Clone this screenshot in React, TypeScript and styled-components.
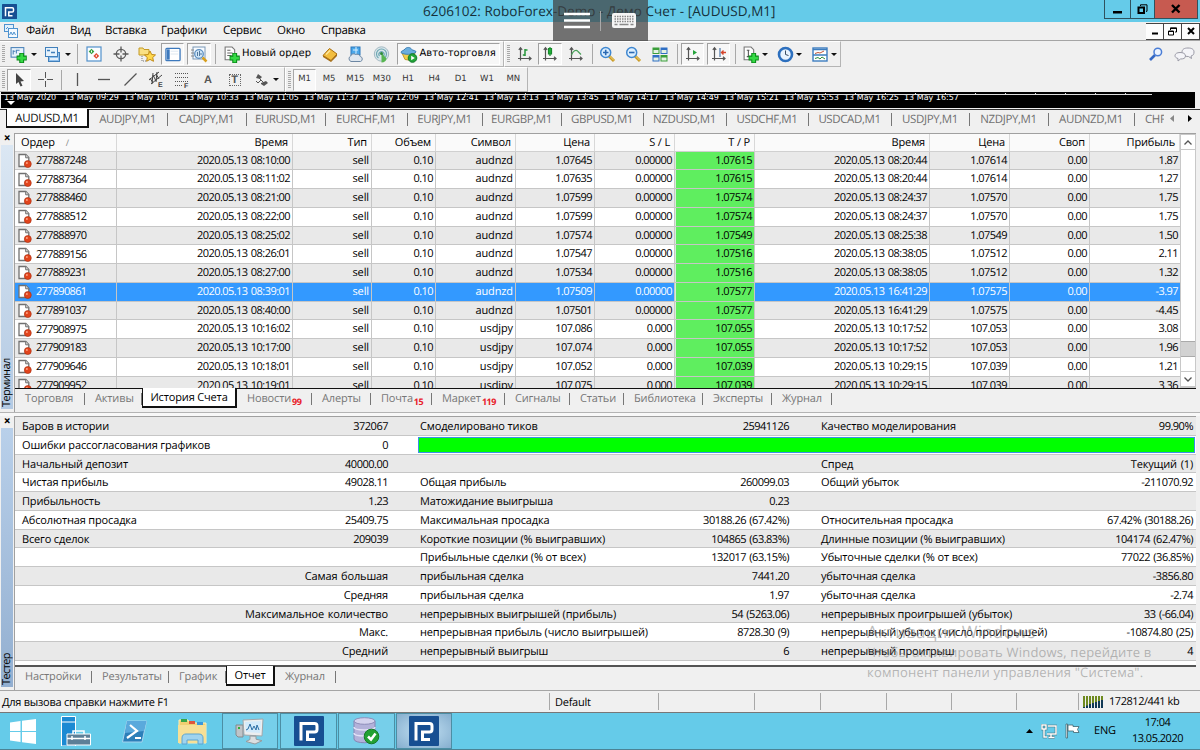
import React from 'react';
import styled, { createGlobalStyle, css } from 'styled-components';

const LOGO_BLUE = '#174f92';

const historyColumns = [
  { title: 'Ордер', width: 102 },
  { title: 'Время', width: 176 },
  { title: 'Тип', width: 79 },
  { title: 'Объем', width: 64 },
  { title: 'Символ', width: 80 },
  { title: 'Цена', width: 79 },
  { title: 'S / L', width: 80 },
  { title: 'T / P', width: 80 },
  { title: 'Время', width: 175 },
  { title: 'Цена', width: 80 },
  { title: 'Своп', width: 80 },
  { title: 'Прибыль', width: 90 },
];

const orders = [
  ['277887248', '08:10:00', 'audnzd', '1.07645', '0.00000', '1.07615', '08:20:44', '1.07614', '1.87'],
  ['277887364', '08:11:02', 'audnzd', '1.07635', '0.00000', '1.07615', '08:20:44', '1.07614', '1.27'],
  ['277888460', '08:21:00', 'audnzd', '1.07599', '0.00000', '1.07574', '08:24:37', '1.07570', '1.75'],
  ['277888512', '08:22:00', 'audnzd', '1.07599', '0.00000', '1.07574', '08:24:37', '1.07570', '1.75'],
  ['277888970', '08:25:02', 'audnzd', '1.07574', '0.00000', '1.07549', '08:25:38', '1.07549', '1.50'],
  ['277889156', '08:26:01', 'audnzd', '1.07547', '0.00000', '1.07516', '08:38:05', '1.07512', '2.11'],
  ['277889231', '08:27:00', 'audnzd', '1.07534', '0.00000', '1.07516', '08:38:05', '1.07512', '1.32'],
  ['277890861', '08:39:01', 'audnzd', '1.07509', '0.00000', '1.07577', '16:41:29', '1.07575', '-3.97'],
  ['277891037', '08:40:00', 'audnzd', '1.07501', '0.00000', '1.07577', '16:41:29', '1.07575', '-4.45'],
  ['277908975', '10:16:02', 'usdjpy', '107.086', '0.000', '107.055', '10:17:52', '107.053', '3.08'],
  ['277909183', '10:17:00', 'usdjpy', '107.074', '0.000', '107.055', '10:17:52', '107.053', '1.96'],
  ['277909646', '10:18:01', 'usdjpy', '107.052', '0.000', '107.039', '10:29:15', '107.039', '1.21'],
  ['277909952', '10:19:01', 'usdjpy', '107.075', '0.000', '107.039', '10:29:15', '107.039', '3.36'],
];
const SELECTED_ORDER = '277890861';

const report = [
  ['Баров в истории', '372067', 'Смоделировано тиков', '25941126', 'Качество моделирования', '99.90%'],
  ['Ошибки рассогласования графиков', '0', '', '', '', ''],
  ['Начальный депозит', '40000.00', '', '', 'Спред', 'Текущий (1)'],
  ['Чистая прибыль', '49028.11', 'Общая прибыль', '260099.03', 'Общий убыток', '-211070.92'],
  ['Прибыльность', '1.23', 'Матожидание выигрыша', '0.23', '', ''],
  ['Абсолютная просадка', '25409.75', 'Максимальная просадка', '30188.26 (67.42%)', 'Относительная просадка', '67.42% (30188.26)'],
  ['Всего сделок', '209039', 'Короткие позиции (% выигравших)', '104865 (63.83%)', 'Длинные позиции (% выигравших)', '104174 (62.47%)'],
  ['', '', 'Прибыльные сделки (% от всех)', '132017 (63.15%)', 'Убыточные сделки (% от всех)', '77022 (36.85%)'],
  ['', 'Самая большая', 'прибыльная сделка', '7441.20', 'убыточная сделка', '-3856.80'],
  ['', 'Средняя', 'прибыльная сделка', '1.97', 'убыточная сделка', '-2.74'],
  ['', 'Максимальное количество', 'непрерывных выигрышей (прибыль)', '54 (5263.06)', 'непрерывных проигрышей (убыток)', '33 (-66.04)'],
  ['', 'Макс.', 'непрерывная прибыль (число выигрышей)', '8728.30 (9)', 'непрерывный убыток (число проигрышей)', '-10874.80 (25)'],
  ['', 'Средний', 'непрерывный выигрыш', '6', 'непрерывный проигрыш', '4'],
];

const chartTabs = [
  { title: 'AUDJPY,M1', width: 79 },
  { title: 'CADJPY,M1', width: 79 },
  { title: 'EURUSD,M1', width: 79 },
  { title: 'EURCHF,M1', width: 82 },
  { title: 'EURJPY,M1', width: 75 },
  { title: 'EURGBP,M1', width: 79 },
  { title: 'GBPUSD,M1', width: 82 },
  { title: 'NZDUSD,M1', width: 83 },
  { title: 'USDCHF,M1', width: 82 },
  { title: 'USDCAD,M1', width: 83 },
  { title: 'USDJPY,M1', width: 78 },
  { title: 'NZDJPY,M1', width: 79 },
  { title: 'AUDNZD,M1', width: 86 },
];

const terminalTabs = [
  { title: 'Торговля', width: 70 },
  { title: 'Активы', width: 57 },
  { title: 'История Счета', width: 95, active: true },
  { title: 'Новости', width: 75, badge: '99' },
  { title: 'Алерты', width: 59 },
  { title: 'Почта', width: 61, badge: '15' },
  { title: 'Маркет', width: 73, badge: '119' },
  { title: 'Сигналы', width: 65 },
  { title: 'Статьи', width: 54 },
  { title: 'Библиотека', width: 79 },
  { title: 'Эксперты', width: 69 },
  { title: 'Журнал', width: 60 },
];

const testerTabs = [
  { title: 'Настройки', width: 77 },
  { title: 'Результаты', width: 77 },
  { title: 'График', width: 57 },
  { title: 'Отчет', width: 49, active: true },
  { title: 'Журнал', width: 61 },
];

const menus = [
  { title: 'Файл', width: 44 },
  { title: 'Вид', width: 35 },
  { title: 'Вставка', width: 56 },
  { title: 'Графики', width: 62 },
  { title: 'Сервис', width: 54 },
  { title: 'Окно', width: 44 },
  { title: 'Справка', width: 60 },
];

const times = ['2020', '09:29', '10:01', '10:33', '11:05', '11:37', '12:09', '12:41', '13:13', '13:45', '14:17', '14:49', '15:21', '15:53', '16:25', '16:57'];
const periods = ['M5', 'M15', 'M30', 'H1', 'H4', 'D1', 'W1', 'MN'];

const AxesIcon = ({ children }: { children?: React.ReactNode }) => (
  <svg width="16" height="16" viewBox="0 0 16 16" fill="none" stroke="#555" strokeWidth="1.2">
    <path d="M3.5 2v12.5M1 12.5h13M1.8 3.8 3.5 1.8l1.7 2M12 10.8l2 1.7-2 1.7" />
    {children}
  </svg>
);

const PlusMark = () => (
  <>
    <path d="M11 6.5v9.500M6.200 11.300h9.600" stroke="#0b8a1a" strokeWidth="4.600" />
    <path d="M11 7.300v8M7 11.300h8" stroke="#35da45" strokeWidth="2.600" />
  </>
);

const NewChartIcon = () => (
  <svg width="17" height="17" viewBox="0 0 16 16" fill="none">
    <rect x="1" y="1.500" width="12" height="9" fill="#e8f3fc" stroke="#4b82b8" />
    <path d="M3 8V4M3 5h2M6 7V4h3" stroke="#4b82b8" />
    <PlusMark />
  </svg>
);

const ProfilesIcon = () => (
  <svg width="17" height="17" viewBox="0 0 17 17" fill="none" stroke="#4180bb">
    <rect x="4.500" y="6.500" width="11" height="9" fill="#8fbfec" />
    <rect x="1.500" y="1.500" width="12" height="9" fill="#e6f2fc" />
    <path d="M3 4.500h3M7 6.500h4" strokeWidth="1.300" />
    <path d="M6 13h8" stroke="#fff" strokeWidth="1.500" />
  </svg>
);

const MarketIcon = () => (
  <svg width="16" height="16" viewBox="0 0 16 16" fill="none">
    <rect x="1" y="1" width="14" height="14" fill="#fbfdff" stroke="#5291cb" strokeWidth="1.200" />
    <path d="m5.500 2.700 2.800 2.800-2.800 2.800-2.800-2.800z" fill="#35a23e" />
    <path d="m10.300 7 2.900 2.900-2.900 2.900-2.900-2.900z" fill="#e2482f" />
    <path d="M5.500 4.500v2M10.300 8.900v2" stroke="#fff" />
  </svg>
);

const TargetIcon = () => (
  <svg width="16" height="16" viewBox="0 0 16 16" fill="none" stroke="#5b5b5b" strokeWidth="1.300">
    <circle cx="8" cy="8" r="4.700" />
    <path d="M8 .5v6M8 9.500v6M.5 8h6M9.500 8h6" />
  </svg>
);

const NavigatorIcon = () => (
  <svg width="18" height="17" viewBox="0 0 18 17" fill="none">
    <path d="M1 2h4l1 1.500h5V9H1z" fill="#f9e084" stroke="#c49a25" />
    <path d="M4 10v5h4" stroke="#777" strokeDasharray="1 1" />
    <path d="m12 5 1.700 3.500 3.800.4-2.800 2.600.8 3.800-3.500-1.900-3.400 1.900.7-3.800L6.500 9l3.800-.5z" fill="#ffd84c" stroke="#c08a16" />
  </svg>
);

const TerminalIcon = () => (
  <svg width="16" height="15" viewBox="0 0 17 15" fill="none">
    <rect x="1" y="1" width="15" height="13" rx="1" fill="#fff" stroke="#3d79bd" strokeWidth="1.400" />
    <path d="M3.500 2v11" stroke="#3d79bd" strokeWidth="3" />
    <path d="M6 4h8M6 7h8" stroke="#dce6f0" />
  </svg>
);

const TesterIcon = () => (
  <svg width="18" height="17" viewBox="0 0 18 17" fill="none">
    <rect x="3" y="1" width="12" height="12" fill="#f7fbff" stroke="#7a97b5" />
    <path d="M1 4h3M1 7h3M1 10h3" stroke="#888" />
    <circle cx="9" cy="8" r="4.300" fill="#c9e2f7" fillOpacity=".85" stroke="#5c8fc2" strokeWidth="1.300" />
    <path d="M7.500 10V6M9.500 10V5M11 9V7" stroke="#51799e" />
    <path d="m12.500 11.500 4 4" stroke="#d8a01d" strokeWidth="2.500" />
  </svg>
);

const NewOrderIcon = ({ chart }: { chart?: boolean }) => (
  <svg width="17" height="17" viewBox="0 0 16 16" fill="none">
    <path d="M2 1h6.500l2.500 2.500V13H2z" fill="#fdfdfd" stroke="#777" />
    {chart ? <path d="M6 4v6M4.500 4H7M4.500 10H7" stroke="#555" /> : <path d="M4 4h3M4 6.500h5M4 9h4" stroke="#666" />}
    <PlusMark />
  </svg>
);

const EditorIcon = () => (
  <svg width="16" height="15" viewBox="0 0 16 15">
    <path d="M1 8.500 7.500 1.500 15 7l-6 6.500z" fill="#f2bd3e" stroke="#a86e11" />
    <path d="m1 8.500 8 5 6-6.500v2L9 15 1 10z" fill="#a66d14" />
    <path d="m4 7.500 4-4" stroke="#ffe79c" strokeWidth="1.500" />
  </svg>
);

const VpsIcon = () => (
  <svg width="17" height="17" viewBox="0 0 17 17">
    <rect x="4" y="1" width="9" height="8" fill="#49a7ea" stroke="#2d78bb" />
    <path d="M6 4h5M9 1v7" stroke="#d7efff" />
    <path d="M4 15.500a3 3 0 0 1-.3-5.500 3 3 0 0 1 4.800-1.500 3.500 3.500 0 0 1 4.800 2 2.600 2.600 0 0 1 .2 5z" fill="#dfe7ef" stroke="#6d87a3" />
  </svg>
);

const SignalsIcon = () => (
  <svg width="17" height="17" viewBox="0 0 17 17" fill="none">
    <circle cx="8.500" cy="8" r="7.200" fill="#d9e6ea" stroke="#a3b9c3" />
    <path d="M5.500 12a5 5 0 1 1 6 0M6.500 10a2.600 2.600 0 1 1 4 0" stroke="#6fa8b4" strokeWidth="1.200" />
    <path d="M8.500 7v9.500c3 0 5-2 5-4z" fill="#58b551" />
    <circle cx="8.500" cy="7.500" r="1.500" fill="#2f8a3a" />
  </svg>
);

const AutoIcon = () => (
  <svg width="18" height="17" viewBox="0 0 18 17">
    <path d="m2 7 3 6.500 7 1L15 7z" fill="#f2cf4a" stroke="#c4982b" />
    <path d="M1 6.500C1 4.500 4 4.800 5 3c1.500-2.200 5.500-2 6.500.3C13 5 16 4 16 6c-2 3-13 3-15 .5z" fill="#6aaede" stroke="#3d7fb5" />
    <circle cx="12.500" cy="12" r="4.300" fill="#22a538" stroke="#12792a" />
    <path d="M11.200 9.800v4.400l3.600-2.200z" fill="#fff" />
  </svg>
);

const ZoomIcon = ({ plus }: { plus?: boolean }) => (
  <svg width="17" height="17" viewBox="0 0 17 17" fill="none">
    <path d="m9.500 9.500 5.500 5.500" stroke="#c99a27" strokeWidth="3" />
    <path d="m10.500 10 4.500 4.500" stroke="#f4d877" />
    <circle cx="6.700" cy="6.500" r="5" fill="#dcefff" stroke="#3f87d0" strokeWidth="1.500" />
    <path d={plus ? 'M4 6.500h5.500M6.700 3.800v5.500' : 'M4 6.500h5.500'} stroke="#2b69b3" strokeWidth="1.600" />
  </svg>
);

const TileIcon = () => (
  <svg width="16" height="15" viewBox="0 0 16 15">
    <path d="M.5.500h7v6.500h-7zM8.500 8h7v6.500h-7z" fill="#3a9e3a" />
    <path d="M8.500.500h7v6.500h-7zM.5 8h7v6.500h-7z" fill="#2f6fc4" />
    <path d="M1.500 3h5v3h-5zM9.500 3h5v3h-5zM1.500 10.500h5v3h-5zM9.500 10.500h5v3h-5z" fill="#e4f1e4" />
  </svg>
);

const ClockIcon = () => (
  <svg width="17" height="17" viewBox="0 0 17 17" fill="none">
    <circle cx="8.500" cy="8.500" r="6.500" fill="#e9f4ff" stroke="#2c6fbe" strokeWidth="2.600" />
    <path d="M8.500 4.500v4l3 1" stroke="#3b4d60" />
  </svg>
);

const TemplateIcon = () => (
  <svg width="16" height="15" viewBox="0 0 16 15" fill="none">
    <rect x="1" y="1" width="14" height="13" fill="#fff" stroke="#3d7dbf" strokeWidth="1.400" />
    <path d="M1 2.500h14M1 8h14" stroke="#3d7dbf" strokeWidth="1.300" />
    <path d="m3 6.500 3-1 2 .5 4-2" stroke="#c35637" />
    <path d="m3 11.500 3-1 2 1.500 2-2 3 2" stroke="#2d8d3b" />
  </svg>
);

const Logo = ({ size }: { size: number }) => (
  <svg width={size} height={size} viewBox="0 0 30 30" fill="none">
    <rect width="30" height="30" rx="1" fill={LOGO_BLUE} />
    <path d="M7 24.500V7.500h13.500q2.500 0 2.500 2.500v3.500q0 2.500-2.500 2.500h-7v7.500H21" stroke="#fff" strokeWidth="3" />
  </svg>
);

const OrderIcon = () => (
  <svg width="14" height="15" viewBox="0 0 14 15">
    <path d="M1 1.500h6.800l3 3v9H1z" fill="#fff" stroke="#707070" strokeWidth="1.300" />
    <path d="M7.700 1.500v3.300h3" fill="#ddd" stroke="#707070" />
    <circle cx="9.800" cy="11" r="3.500" fill="#e2451d" stroke="#a62b0e" strokeWidth=".6" />
    <circle cx="8.900" cy="10" r="1" fill="#ff9f7e" />
  </svg>
);

const App = () => (
  <>
    <GlobalStyle />
    <Screen>
      <TitleBar>
        <Logo size={15} />
        <TitleText>6206102: RoboForex-Demo - Демо Счет - [AUDUSD,M1]</TitleText>
        <WindowButtons>
          <WindowButton $width={25}>
            <svg width="10" height="10"><path d="M0 7h9v2.500H0z" /></svg>
          </WindowButton>
          <WindowButton $width={24}>
            <svg width="11" height="11" fill="none" stroke="#000">
              <path d="M3.500 2V.800h6.500v6.500H9" />
              <path d="M1.500 3.500h5.500V9H1.500z" strokeWidth="2" />
            </svg>
          </WindowButton>
          <WindowButton $width={43} $close>
            <svg width="10" height="10" stroke="#000" strokeWidth="2.400"><path d="m1 1 7.500 7.500M8.500 1 1 8.500" /></svg>
          </WindowButton>
        </WindowButtons>
      </TitleBar>

      <RemoteBar>
        <svg width="26" height="17" stroke="#fff" strokeWidth="2.400"><path d="M0 2h26M0 8.500h26M0 15h26" /></svg>
        <RemoteDivider />
        <svg width="24" height="15" viewBox="0 0 24 15">
          <rect width="24" height="15" rx="2" fill="#f5f5f5" />
          <path d="M2.500 3.500h19M2.500 6h19M2.500 8.500h19" stroke="#888" strokeWidth="1.500" strokeDasharray="1.500 1" />
          <path d="M2.500 11.500h3M7.500 11.500h9M18.500 11.500h3" stroke="#888" strokeWidth="1.500" />
        </svg>
      </RemoteBar>

      <MenuBar>
        <svg width="14" height="14" viewBox="0 0 14 14" fill="none" stroke="#4f93cf">
          <rect x=".5" y=".5" width="9" height="7" fill="#e4f1fc" />
          <rect x="4.500" y="4.500" width="9" height="9" fill="#f4faff" />
          <path d="m5.500 11 1.500-3 1.500 3L10 8l1.500 3M2 5l2-2" />
        </svg>
        <MenuList>
          {menus.map(({ title, width }) => (
            <MenuItem key={title} $width={width}>{title}</MenuItem>
          ))}
        </MenuList>
        <MdiButton>
          <svg width="8" height="8"><path d="M1 5.500h6v2H1z" /></svg>
        </MdiButton>
        <MdiButton>
          <svg width="9" height="9" fill="none" stroke="#000"><path d="M2.500 3V.800h6V5H7M2.500 1.500h6M.5 4h5v4h-5zM.5 4.500h5" /></svg>
        </MdiButton>
        <MdiButton>
          <svg width="8" height="8" stroke="#000" strokeWidth="2"><path d="m1 1 6 6M7 1 1 7" /></svg>
        </MdiButton>
      </MenuBar>

      <Toolbar $height={26}>
        <ToolGroup $width={504}>
          <Grip />
          <Slot $width={19} $before={4}><NewChartIcon /></Slot>
          <Slot $width={11}><Caret /></Slot>
          <Slot $width={17} $before={5}><ProfilesIcon /></Slot>
          <Slot $width={12} $before={1}><Caret /></Slot>
          <Slot $width={7}><Divider /></Slot>
          <Slot $width={26}><MarketIcon /></Slot>
          <Slot $width={27}><TargetIcon /></Slot>
          <Slot $width={25}><NavigatorIcon /></Slot>
          <Slot $width={23} $before={2} $pressed><TerminalIcon /></Slot>
          <Slot $width={24} $before={3} $pressed><TesterIcon /></Slot>
          <Slot $width={8}><Divider /></Slot>
          <Slot $width={18} $before={3}><NewOrderIcon /></Slot>
          <ToolText $width={76}>Новый ордер</ToolText>
          <Slot $width={27}><EditorIcon /></Slot>
          <Slot $width={25}><VpsIcon /></Slot>
          <Slot $width={26}><SignalsIcon /></Slot>
          <Slot $width={103} $before={3} $pressed>
            <AutoIcon />
            <ToolText $width={80}>Авто-торговля</ToolText>
          </Slot>
        </ToolGroup>
        <ToolGroup $width={337}>
          <Grip />
          <Slot $width={27} $before={1}><AxesIcon><path d="M8 10V3M8 4h2.500M5.800 9H8" stroke="#27973b" strokeWidth="1.500" /></AxesIcon></Slot>
          <Slot $width={24} $pressed><AxesIcon><path d="M8 1v9" stroke="#188a2c" /><path d="M6.500 2.500h3v5.500h-3z" fill="#22b33a" stroke="#188a2c" /></AxesIcon></Slot>
          <Slot $width={28}><AxesIcon><path d="M3.500 9C5 5 8 3 10 5.500l3 3" stroke="#4aa25a" /></AxesIcon></Slot>
          <Slot $width={4}><Divider /></Slot>
          <Slot $width={26}><ZoomIcon plus /></Slot>
          <Slot $width={26}><ZoomIcon /></Slot>
          <Slot $width={27}><TileIcon /></Slot>
          <Slot $width={8}><Divider /></Slot>
          <Slot $width={23} $pressed><AxesIcon><path d="m8 4 4 2.500L8 9z" fill="#25a33a" stroke="none" /></AxesIcon></Slot>
          <Slot $width={23} $before={3} $pressed><AxesIcon><path d="M9 2v9" stroke="#4b77a8" /><path d="M15 6.500h-4M12.500 4.500l-2 2 2 2" stroke="#d4452c" strokeWidth="1.400" /></AxesIcon></Slot>
          <Slot $width={10}><Divider /></Slot>
          <Slot $width={20}><NewOrderIcon chart /></Slot>
          <Slot $width={9}><Caret /></Slot>
          <Slot $width={18} $before={7}><ClockIcon /></Slot>
          <Slot $width={9}><Caret /></Slot>
          <Slot $width={18} $before={8}><TemplateIcon /></Slot>
          <Slot $width={9}><Caret /></Slot>
        </ToolGroup>
        <ToolEnd>
          <svg width="14" height="14" viewBox="0 0 14 14" fill="none">
            <path d="m6 8-5 5" stroke="#3568c4" strokeWidth="2.600" />
            <circle cx="8.800" cy="5" r="3.800" fill="#edf4ff" stroke="#4b7ed6" strokeWidth="1.500" />
          </svg>
          <svg width="21" height="15" viewBox="0 0 21 15" fill="#f4f4f8" stroke="#9a9aa6">
            <path d="M14 1c4 0 6 1.500 6 4s-1 3.500-3 4l.5 2.500L14.500 9.500C10 9.500 8 8 8 5.200S10 1 14 1z" />
            <path d="M6 5.500c3 0 5.500 1 5.500 3.500S9 12 6.500 12L4 14v-2.500C2 11 1 10 1 8.700c0-2 2-3.200 5-3.200z" />
          </svg>
        </ToolEnd>
      </Toolbar>

      <Toolbar $height={25}>
        <ToolGroup $width={285}>
          <Grip />
          <Slot $width={24} $before={2} $pressed>
            <svg width="14" height="16"><path d="M4 1v11l2.500-2 2 4.500 2-.8-2-4.300 3.500-.3z" fill="#444" /></svg>
          </Slot>
          <Slot $width={28}>
            <svg width="15" height="15" stroke="#555"><path d="M7.500 0v6M7.500 9v6M0 7.500h6M9 7.500h6" /></svg>
          </Slot>
          <Slot $width={5}><Divider /></Slot>
          <Slot $width={26}><svg width="3" height="13" stroke="#555" strokeWidth="1.300"><path d="M1.500 0v13" /></svg></Slot>
          <Slot $width={27}><svg width="12" height="3" stroke="#555" strokeWidth="1.300"><path d="M0 1.500h12" /></svg></Slot>
          <Slot $width={26}><svg width="13" height="13" stroke="#555" strokeWidth="1.200"><path d="M.5 12.500 12.500.500" /></svg></Slot>
          <Slot $width={26}>
            <svg width="17" height="17" stroke="#444" fill="none">
              <path d="m1 9 10-8M3 13 14 4M2 7l3 5M5 4l3 6M8 3l3 5M5 2 4 13M9 1 8 11" />
              <text x="10" y="16" fontSize="7" fontWeight="700" fill="#444" stroke="none" fontFamily="Liberation Sans">E</text>
            </svg>
          </Slot>
          <Slot $width={26}>
            <svg width="16" height="18" stroke="#555" fill="none">
              <path d="M1 2.500h13M1 6.500h13M1 10.500h13M1 14.500h8" strokeDasharray="1 1" />
              <text x="10" y="16.500" fontSize="7" fontWeight="700" fill="#444" stroke="none" fontFamily="Liberation Sans">F</text>
            </svg>
          </Slot>
          <Slot $width={26}><Glyph>A</Glyph></Slot>
          <Slot $width={27}><TextLabel>T</TextLabel></Slot>
          <Slot $width={25}>
            <svg width="14" height="14" fill="#555"><path d="m4 1 4 3-2 2-4-1zM4 6v2M2 8l4-1M7 10l5-2 2 2-4 3-3-2z" /><path d="m5 5 5 5M2 8l2 2 3-3" stroke="#555" fill="none" /></svg>
          </Slot>
          <Slot $width={6}><Caret /></Slot>
        </ToolGroup>
        <ToolGroup $width={243}>
          <Grip />
          <Period $pressed>M1</Period>
          {periods.map((period) => (
            <Period key={period}>{period}</Period>
          ))}
        </ToolGroup>
      </Toolbar>

      <ChartStrip>
        <TimeLine />
        {times.map((time) => (
          <TimeLabel key={time}>{`13 May ${time}`}</TimeLabel>
        ))}
        <ShiftMark />
      </ChartStrip>

      <ChartTabs>
        <ActiveChartTab>AUDUSD,M1</ActiveChartTab>
        {chartTabs.map(({ title, width }) => (
          <ChartTab key={title} $width={width}>{title}</ChartTab>
        ))}
        <ClippedTab>CHF</ClippedTab>
        <TabArrows>
          <svg width="4" height="7" fill="#888"><path d="M4 0v7L0 3.500z" /></svg>
          <svg width="4" height="7"><path d="M0 0v7l4-3.500z" /></svg>
        </TabArrows>
      </ChartTabs>

      <Panel $height={279}>
        <Side>
          <SideClose>×</SideClose>
          <SideTitle $from="#dbe7f3" $to="#b4cae3">Терминал</SideTitle>
        </Side>
        <PanelBody>
          <TableArea>
            <History>
              <HistoryHeader>
                {historyColumns.map(({ title, width }, i) => (
                  <HeaderCell key={i} $width={width} $first={i === 0}>
                    {title}
                    {i === 0 && <SortMark>/</SortMark>}
                  </HeaderCell>
                ))}
              </HistoryHeader>
              {orders.map(([id, open, symbol, price, sl, tp, close, closePrice, profit], index) => {
                const cells = [`2020.05.13 ${open}`, 'sell', '0.10', symbol, price, sl, tp, `2020.05.13 ${close}`, closePrice, '0.00', profit];
                return (
                  <HistoryRow key={id} $odd={index % 2 === 0} $selected={id === SELECTED_ORDER}>
                    <IdCell $width={historyColumns[0].width}>
                      <OrderIcon />
                      {id}
                    </IdCell>
                    {cells.map((cell, i) => (
                      <Cell key={i} $width={historyColumns[i + 1].width} $green={i === 6} $word={i === 1 || i === 3}>{cell}</Cell>
                    ))}
                  </HistoryRow>
                );
              })}
            </History>
            <ScrollBar>
              <ScrollButton><svg width="8" height="5" fill="none" stroke="#555" strokeWidth="1.300"><path d="m.5 4.500 3.500-3.500 3.500 3.500" /></svg></ScrollButton>
              <ScrollThumb />
              <ScrollButton><svg width="8" height="5" fill="none" stroke="#555" strokeWidth="1.300"><path d="m.5.500 3.500 3.500L7.500.500" /></svg></ScrollButton>
            </ScrollBar>
          </TableArea>
          <BottomTabs>
            {terminalTabs.map(({ title, width, badge, active }) => (
              <BottomTab key={title} $width={width} $active={active}>
                {title}
                {badge && <Badge>{badge}</Badge>}
              </BottomTab>
            ))}
          </BottomTabs>
        </PanelBody>
      </Panel>

      <Splitter />

      <Panel $height={274}>
        <Side>
          <SideClose>×</SideClose>
          <SideTitle $from="#b9d0ea" $to="#93afd0">Тестер</SideTitle>
        </Side>
        <PanelBody>
          <Report>
            {report.map(([label, value, label2, value2, label3, value3], i) => (
              <ReportRow key={i} $odd={i % 2 === 0}>
                <Field $width={366}><span>{label}</span><Value $number={label !== ''}>{value}</Value></Field>
                {i === 1 ? (
                  <QualityBar />
                ) : (
                  <>
                    <Field $width={369}><span>{label2}</span><Value $number>{value2}</Value></Field>
                    <Field $width={372}><span>{label3}</span><Value $number={i !== 2}>{value3}</Value></Field>
                  </>
                )}
              </ReportRow>
            ))}
          </Report>
          <BottomTabs>
            {testerTabs.map(({ title, width, active }) => (
              <BottomTab key={title} $width={width} $active={active}>{title}</BottomTab>
            ))}
          </BottomTabs>
        </PanelBody>
      </Panel>

      <StatusBar>
        <StatusCell $width={550}>Для вызова справки нажмите F1</StatusCell>
        <StatusCell $width={109}>Default</StatusCell>
        <StatusCell $width={96} />
        <StatusCell $width={66} />
        <StatusCell $width={66} />
        <StatusCell $width={65} />
        <StatusCell $width={65} />
        <StatusCell $width={62} />
        <Traffic>
          <svg width="22" height="14" strokeWidth="2">
            <path d="M1 1v12M4 1v12M7 1v12M10 1v12M13 1v12M16 1v12M19 1v12" stroke="#6f8a1f" />
            <path d="M1 12v1M4 10.500V13M7 9v4M10 8v5M13 7v6M16 6v7M19 5v8" stroke="#123a56" />
          </svg>
          172812/441 kb
        </Traffic>
      </StatusBar>

      <TaskBar>
        <TaskItem $width={46}>
          <svg width="26" height="25" viewBox="0 0 26 25" fill="#fff"><path d="m0 3.500 10.500-1.500V12H0zM12 1.800 26 0v12H12zM0 13h10.500v10L0 21.500zM12 13h14v12l-14-1.800z" /></svg>
        </TaskItem>
        <TaskItem $width={58} $before={1}>
          <svg width="30" height="30" viewBox="0 0 30 30">
            <path d="M.5.500h14V30H.5z" fill="#1b8ad3" stroke="#fff" />
            <path d="M.5 6h14" stroke="#fff" />
            <path d="M6 18h23.500v11H6z" fill="#5d7f97" stroke="#fff" />
            <path d="M12 18v-3h11v3M6 22.500h23.500M11 20v4M24 20v4" fill="none" stroke="#fff" strokeWidth="1.500" />
          </svg>
        </TaskItem>
        <TaskItem $width={58}>
          <svg width="27" height="23" viewBox="0 0 27 23">
            <path d="M6 1h19.500L21 22H1.500z" fill="#2c7fb9" stroke="#a6d4ee" />
            <path d="M6 1h19.500L23 11 4 13z" fill="#5aa9dc" />
            <path d="m9 5 7 6-10 7M14 18h6" fill="none" stroke="#fff" strokeWidth="2.200" />
          </svg>
        </TaskItem>
        <TaskItem $width={59}>
          <svg width="31" height="28" viewBox="0 0 31 28">
            <path d="M2 3h9l2 3h16v20H2z" fill="#f0cf72" stroke="#fff0b8" />
            <path d="M4 2h6v3H4z" fill="#35a548" />
            <path d="M12 4h6v3h-6z" fill="#e0553b" />
            <path d="M20 5h6v3h-6z" fill="#3a98dd" />
            <path d="M1 8h28v18H1z" fill="#f7e096" />
            <path d="M5 27v-6c0-3 2-4 4-4h13c3 0 4 2 4 4v6h-5v-4H10v4z" fill="#9fd3ee" stroke="#5ba5d2" />
          </svg>
        </TaskItem>
        <TaskItem $width={56} $open>
          <svg width="30" height="27" viewBox="0 0 30 27">
            <path d="M1 7h7v12H3L1 17z" fill="#bfc4c8" stroke="#84898c" />
            <path d="M3 9h2v2H3z" fill="#2eaf3b" />
            <path d="m8 2 20-1-1 17-18-1z" fill="#eceeef" stroke="#a0a6aa" />
            <path d="m10 4 16-1-1 12-14-1z" fill="#d3eafa" />
            <path d="m11 12 2-1 2-5 2 6 2-4 2 4 1-5 2 5" fill="none" stroke="#2c6fa6" />
            <path d="m15 18 6 .2v3l6 1.500-7 3.300-9-2.500 4-2z" fill="#dcdfe1" stroke="#969b9e" />
          </svg>
        </TaskItem>
        <TaskItem $width={57} $before={2} $open><Logo size={30} /></TaskItem>
        <TaskItem $width={57} $before={1} $open>
          <svg width="27" height="28" viewBox="0 0 27 28">
            <path d="M1 4v18c0 5 21 5 21 0V4" fill="#b3b2da" stroke="#8685b5" />
            <path d="M1 10c0 4 21 4 21 0M1 16c0 4 21 4 21 0" fill="none" stroke="#e2e1f6" strokeWidth="1.500" />
            <ellipse cx="11.500" cy="4" rx="10.500" ry="3.300" fill="#d4d3ee" stroke="#8f8eba" />
            <circle cx="18.500" cy="19.500" r="7.300" fill="#23a133" stroke="#147a25" />
            <path d="m15 19.500 3 3 4.500-6" fill="none" stroke="#fff" strokeWidth="2.600" />
          </svg>
        </TaskItem>
        <TaskItem $width={56} $before={1} $open $active><Logo size={30} /></TaskItem>
        <Tray>
          <svg width="7" height="4"><path d="M3.500 0 7 4H0z" /></svg>
          <svg width="16" height="15" viewBox="0 0 16 15" fill="none" stroke="#fff" strokeWidth="1.500">
            <path d="M1 1h4v4H1zM3 5v8h3M7 2h8v8H6M10 10v3M7.500 13.500h6" stroke="#41656f" strokeWidth="2.500" />
            <path d="M1 1h4v4H1zM3 5v8h3M7 2h8v8H6M10 10v3M7.500 13.500h6" />
          </svg>
          <svg width="16" height="16" viewBox="0 0 16 16" fill="#fff" stroke="#41656f" strokeWidth=".8">
            <path d="M1 1h1.500v14H1zM3 2h5v1.500h6l-1.500 3L14 9.500H8.500V8H3z" />
          </svg>
          <Language>ENG</Language>
          <Clock>
            <span>17:04</span>
            <span>13.05.2020</span>
          </Clock>
        </Tray>
      </TaskBar>

      <Watermark>
        <WatermarkTitle>Активация Windows</WatermarkTitle>
        <span>Чтобы активировать Windows, перейдите в</span>
        <span>компонент панели управления "Система".</span>
      </Watermark>
    </Screen>
  </>
);

const GlobalStyle = createGlobalStyle`
  * {
    box-sizing: border-box;
  }

  body {
    margin: 0;
    overflow: hidden;
    background: #f0f0f0;
    color: #000;
    font-family: 'Open Sans', 'Noto Sans', sans-serif;
    font-size: 11px;
    font-weight: 500;
    letter-spacing: -0.15px;
    line-height: 14px;
    text-rendering: geometricPrecision;
    white-space: nowrap;
  }

  svg {
    display: block;
    flex: none;
  }
`;

const Screen = styled.div`
  position: relative;
  display: flex;
  flex-direction: column;
  width: 1200px;
  height: 750px;
  overflow: hidden;
  background: #f0f0f0;
`;

const TitleBar = styled.header`
  display: flex;
  align-items: center;
  flex: none;
  height: 22px;
  padding-left: 2px;
  background: #65cbe9;
`;

const TitleText = styled.h1`
  flex: 1;
  margin: 0;
  padding-left: 406px;
  font-weight: 400;
  font-size: 13.5px;
  letter-spacing: 0.04px;
  line-height: 20px;
  color: #15303a;
`;

const WindowButtons = styled.div`
  display: flex;
  align-self: flex-start;
  height: 19px;
  margin-right: 2px;
  border: 1px solid #2f525e;
  border-top: 0;
`;

const WindowButton = styled.div<{ $width: number; $close?: boolean }>`
  display: flex;
  align-items: center;
  justify-content: center;
  width: ${({ $width }) => $width}px;
  background: ${({ $close }) => ($close ? '#c75a50' : 'transparent')};

  & + & {
    border-left: 1px solid #2f525e;
  }
`;

const RemoteBar = styled.div`
  position: absolute;
  top: 0;
  left: 553px;
  display: flex;
  align-items: center;
  width: 95px;
  height: 41px;
  padding-left: 11px;
  background: rgba(64, 64, 64, 0.72);
`;

const RemoteDivider = styled.div`
  width: 1px;
  height: 20px;
  margin: 0 11px 0 10px;
  background: #aaa;
`;

const MenuBar = styled.nav`
  display: flex;
  align-items: center;
  flex: none;
  height: 19px;
  padding-left: 4px;
  border-bottom: 1px solid #a5a5a5;
`;

const MenuList = styled.div`
  display: flex;
  flex: 1;
  padding-left: 8px;
`;

const MenuItem = styled.span<{ $width: number }>`
  width: ${({ $width }) => $width}px;
  font-size: 11.5px;
  letter-spacing: -0.3px;
`;

const MdiButton = styled.div`
  display: flex;
  align-items: center;
  justify-content: center;
  width: 18px;
  height: 17px;
  border: 1px solid #444;
  border-left-width: 0;
  background: #fdfdfd;

  &:first-of-type {
    border-left-width: 1px;
  }
`;

const Toolbar = styled.div<{ $height: number }>`
  display: flex;
  flex: none;
  height: ${({ $height }) => $height}px;
`;

const ToolGroup = styled.div<{ $width: number }>`
  display: flex;
  align-items: center;
  width: ${({ $width }) => $width}px;
  padding-left: 2px;
  border: 1px solid #b4b4b4;
  border-top: 1px solid #fff;
  border-left: 0;

  & + & {
    border-left: 1px solid #fff;
  }
`;

const Grip = styled.div`
  width: 3px;
  height: 18px;
  background: repeating-linear-gradient(#a8a8a8 0 1px, #f0f0f0 1px 2px);
`;

const Slot = styled.div<{ $width: number; $before?: number; $pressed?: boolean }>`
  display: flex;
  align-items: center;
  justify-content: center;
  flex: none;
  width: ${({ $width }) => $width}px;
  height: 22px;
  margin-left: ${({ $before = 0 }) => $before}px;
  ${({ $pressed }) =>
    $pressed &&
    css`
      border: 1px solid #a0a0a0;
      border-right-color: #fff;
      border-bottom-color: #fff;
      background: #f7f7f7;
    `}
`;

const Caret = styled.i`
  border: 3px solid transparent;
  border-top-color: #111;
  border-bottom-width: 0;
`;

const Divider = styled.i`
  width: 1px;
  height: 20px;
  background: #a8a8a8;
`;

const ToolText = styled.span<{ $width: number }>`
  width: ${({ $width }) => $width}px;
  padding-left: 2px;
  font-family: 'DejaVu Sans', sans-serif;
  font-size: 10px;
  letter-spacing: 0;
`;

const ToolEnd = styled.div`
  display: flex;
  align-items: center;
  justify-content: flex-end;
  gap: 11px;
  flex: 1;
  padding-right: 5px;
`;

const Glyph = styled.span`
  font-family: 'Liberation Sans', sans-serif;
  font-weight: 700;
  font-size: 11px;
  color: #555;
`;

const TextLabel = styled(Glyph)`
  width: 12px;
  height: 12px;
  border: 1px dotted #666;
  line-height: 11px;
  text-align: center;
`;

const Period = styled.div<{ $pressed?: boolean }>`
  display: flex;
  align-items: center;
  justify-content: center;
  width: ${({ $pressed }) => ($pressed ? 23 : 26.3)}px;
  height: 22px;
  margin-left: ${({ $pressed }) => ($pressed ? 2 : 0)}px;
  border: ${({ $pressed }) => ($pressed ? '1px solid #a8a8a8' : '0')};
  border-right-color: #fff;
  border-bottom-color: #fff;
  background: ${({ $pressed }) => ($pressed ? '#f8f8f8' : 'transparent')};
  font-family: 'DejaVu Sans', sans-serif;
  font-size: 8.5px;
  letter-spacing: 0;
  line-height: 15px;
  color: #333;
`;

const ChartStrip = styled.div`
  position: relative;
  display: flex;
  flex: none;
  height: 16px;
  margin: 0 5px 0 1px;
  padding-left: 3px;
  overflow: hidden;
  background: #000;
`;

const TimeLine = styled.div`
  position: absolute;
  top: 1px;
  left: 0;
  width: 1151px;
  height: 2px;
  border-bottom: 1px solid #ddd;
  background: repeating-linear-gradient(90deg, transparent 0 14px, #ddd 14px 15px, transparent 15px 30px);
`;

const TimeLabel = styled.span`
  flex: none;
  width: 60px;
  font-family: 'DejaVu Sans', sans-serif;
  font-size: 8px;
  letter-spacing: 0;
  line-height: 12px;
  color: #fff;
`;

const ShiftMark = styled.i`
  position: absolute;
  top: 9px;
  left: 6px;
  border: 4px solid transparent;
  border-top-color: #fff;
  border-bottom-width: 0;
`;

const ChartTabs = styled.div`
  display: flex;
  flex: none;
  height: 24px;
  margin-top: 1px;
  border-top: 1px solid #333;
  font-size: 11.5px;
  letter-spacing: -0.4px;
  color: #707070;
`;

const ActiveChartTab = styled.div`
  width: 83px;
  height: 19px;
  margin: -1px 0 0 6px;
  border: 1px solid #111;
  border-top: 0;
  border-right-width: 2px;
  border-bottom-width: 2px;
  background: #fff;
  color: #111;
  line-height: 20px;
  text-align: center;
`;

const ChartTab = styled.div<{ $width: number }>`
  display: flex;
  align-items: center;
  justify-content: center;
  width: ${({ $width }) => $width}px;
  height: 19px;

  &::after {
    content: '';
    width: 1px;
    height: 13px;
    margin-left: auto;
    background: #777;
  }

  &::before {
    content: '';
    margin: 0 -1px 0 auto;
  }
`;

const ClippedTab = styled.div`
  width: 29px;
  padding-left: 10px;
  overflow: hidden;
  line-height: 20px;
`;

const TabArrows = styled.div`
  display: flex;
  justify-content: space-between;
  width: 22px;
  margin: 5px 0 0 6px;
`;

const Panel = styled.section<{ $height: number }>`
  display: flex;
  flex: none;
  height: ${({ $height }) => $height}px;
`;

const Side = styled.aside`
  display: flex;
  flex-direction: column;
  width: 14px;
  padding: 0 1px 3px;
`;

const SideClose = styled.div`
  height: 12px;
  font-weight: 700;
  font-size: 12px;
  line-height: 9px;
  text-align: center;
`;

const SideTitle = styled.div<{ $from: string; $to: string }>`
  flex: 1;
  writing-mode: vertical-rl;
  transform: rotate(180deg);
  padding-top: 2px;
  background: linear-gradient(${({ $to }) => $to}, ${({ $from }) => $from});
  letter-spacing: -0.6px;
  line-height: 12px;
`;

const PanelBody = styled.div`
  display: flex;
  flex-direction: column;
  flex: none;
  width: 1182px;
  border-top: 1px solid #a0a0a0;
  border-left: 1px solid #a0a0a0;
`;

const TableArea = styled.div`
  display: flex;
  height: 255px;
  border-bottom: 1px solid #111;
  background: #fff;
`;

const History = styled.div`
  width: 1165px;
  overflow: hidden;
`;

const HistoryHeader = styled.div`
  display: flex;
  height: 17.5px;
  border-bottom: 1px solid #d0d0d0;
  background: #fafafa;
`;

const HeaderCell = styled.div<{ $width: number; $first: boolean }>`
  width: ${({ $width }) => $width}px;
  padding: ${({ $first }) => ($first ? '0 0 0 6px' : '0 4px 0 0')};
  text-align: ${({ $first }) => ($first ? 'left' : 'right')};
  line-height: 17px;
  border-right: 1px solid #d8d8d8;
`;

const SortMark = styled.span`
  margin-left: 11px;
  color: #888;
  font-size: 9px;
`;

const HistoryRow = styled.div<{ $odd: boolean; $selected: boolean }>`
  display: flex;
  height: 18.75px;
  border-bottom: 1px solid #c6c6c6;
  background: ${({ $odd, $selected }) => ($selected ? '#3399ff' : $odd ? '#e9e9e9' : '#fff')};
  color: ${({ $selected }) => ($selected ? '#fff' : '#000')};
`;

const Cell = styled.div<{ $width: number; $green?: boolean; $word?: boolean }>`
  width: ${({ $width }) => $width}px;
  padding-right: 2px;
  border-right: 1px solid #c6c6c6;
  letter-spacing: ${({ $word }) => ($word ? -0.1 : -0.55)}px;
  word-spacing: 1px;
  line-height: 18px;
  text-align: right;

  &:last-child {
    border-right: 0;
  }

  ${({ $green }) =>
    $green &&
    css`
      background: #5fee5f;
      box-shadow: inset 1px 0 #d8ead8;
      color: #000;
    `}
`;

const IdCell = styled.div<{ $width: number }>`
  display: flex;
  align-items: center;
  gap: 4px;
  width: ${({ $width }) => $width}px;
  padding-left: 3px;
  border-right: 1px solid #c6c6c6;
  letter-spacing: -0.7px;
  line-height: 17px;
`;

const ScrollBar = styled.div`
  display: flex;
  flex-direction: column;
  justify-content: space-between;
  width: 16px;
  border: 1px solid #c8c8c8;
  border-top: 0;
`;

const ScrollButton = styled.div`
  display: flex;
  align-items: center;
  justify-content: center;
  height: 16px;
  border: solid #c8c8c8;
  border-width: 1px 0;
`;

const ScrollThumb = styled.div`
  height: 16px;
  margin-top: 176px;
  border: solid #aaa;
  border-width: 1px 0;
  background: #d2d2d2;
`;

const BottomTabs = styled.div`
  display: flex;
`;

const BottomTab = styled.div<{ $width: number; $active?: boolean }>`
  display: flex;
  align-items: center;
  width: ${({ $width }) => $width}px;
  height: 19px;
  padding-left: 10px;
  color: #777;

  &::after {
    content: '';
    width: 1px;
    height: 12px;
    margin-left: auto;
    background: #777;
  }

  ${({ $active }) =>
    $active &&
    css`
      justify-content: center;
      height: 20px;
      margin-top: -1px;
      padding: 2px 0 0;
      border: solid #111;
      border-width: 0 2px 2px 1px;
      background: #fff;
      color: #000;

      &::after {
        display: none;
      }
    `}
`;

const Badge = styled.span`
  align-self: flex-end;
  margin: 0 0 1px 1px;
  font-weight: 700;
  font-size: 9px;
  letter-spacing: -0.4px;
  line-height: 11px;
  color: #e8202a;
`;

const Splitter = styled.div`
  height: 5px;
  border-top: 1px solid #b4b4b4;
  background: #f8f8f8;
`;

const Report = styled.div`
  height: 250px;
  border-bottom: 2px solid #555;
  background: #fff;
  overflow: hidden;
`;

const ReportRow = styled.div<{ $odd: boolean }>`
  display: flex;
  height: 18.75px;
  padding-left: 7px;
  border-bottom: 1px solid #c6c6c6;
  background: ${({ $odd }) => ($odd ? '#e9e9e9' : '#fff')};
  line-height: 19px;
`;

const Field = styled.div<{ $width: number }>`
  display: flex;
  justify-content: space-between;
  flex: none;
  width: ${({ $width }) => $width}px;

  & + & {
    margin-left: 32px;
  }
`;

const Value = styled.span<{ $number: boolean }>`
  letter-spacing: ${({ $number }) => ($number ? -0.5 : -0.15)}px;
  word-spacing: 1px;
`;

const QualityBar = styled.div`
  flex: none;
  width: 777px;
  height: 16px;
  margin: 1px 0 0 30px;
  border: 1px solid #3a8fe8;
  background: #00ff00;
`;

const StatusBar = styled.footer`
  display: flex;
  align-items: center;
  flex: none;
  height: 23px;
  border-top: 1px solid #a5a5a5;
  border-bottom: 1px solid #777;
  letter-spacing: -0.25px;
`;

const StatusCell = styled.div<{ $width: number }>`
  flex: none;
  width: ${({ $width }) => $width}px;
  height: 17px;
  padding-left: 2px;
  border-right: 1px solid #a8a8a8;
  line-height: 19px;

  & + & {
    padding-left: 5px;
  }
`;

const Traffic = styled.div`
  display: flex;
  align-items: center;
  gap: 4px;
  padding-left: 4px;
  letter-spacing: -0.45px;
  line-height: 16px;
`;

const TaskBar = styled.div`
  display: flex;
  flex: none;
  height: 37px;
  background: #65cbe9;
  border-bottom: 1px solid #4b8395;
`;

const TaskItem = styled.div<{ $width: number; $before?: number; $open?: boolean; $active?: boolean }>`
  display: flex;
  align-items: center;
  justify-content: center;
  flex: none;
  width: ${({ $width }) => $width}px;
  margin-left: ${({ $before = 0 }) => $before}px;
  ${({ $open }) =>
    $open &&
    css`
      border: 1px solid #4c8ea4;
      background: #76cfea;
    `}
  ${({ $active }) => $active && 'background: radial-gradient(#c4e2f4, #85aece);'}
`;

const Tray = styled.div`
  display: flex;
  align-items: center;
  flex: 1;
  gap: 8px;
  justify-content: flex-end;
  padding-right: 17px;
`;

const Language = styled.span`
  margin: 0 8px 0 5px;
  line-height: 16px;
`;

const Clock = styled.div`
  display: flex;
  flex-direction: column;
  align-items: center;
  letter-spacing: -0.5px;
  line-height: 16px;
`;

const Watermark = styled.div`
  position: absolute;
  top: 621px;
  left: 867px;
  display: flex;
  flex-direction: column;
  color: rgba(120, 120, 120, 0.5);
  font-weight: 400;
  font-size: 13px;
  letter-spacing: 0.2px;
  line-height: 20px;
`;

const WatermarkTitle = styled.span`
  font-size: 17px;
  line-height: 21px;
`;

export default App;
